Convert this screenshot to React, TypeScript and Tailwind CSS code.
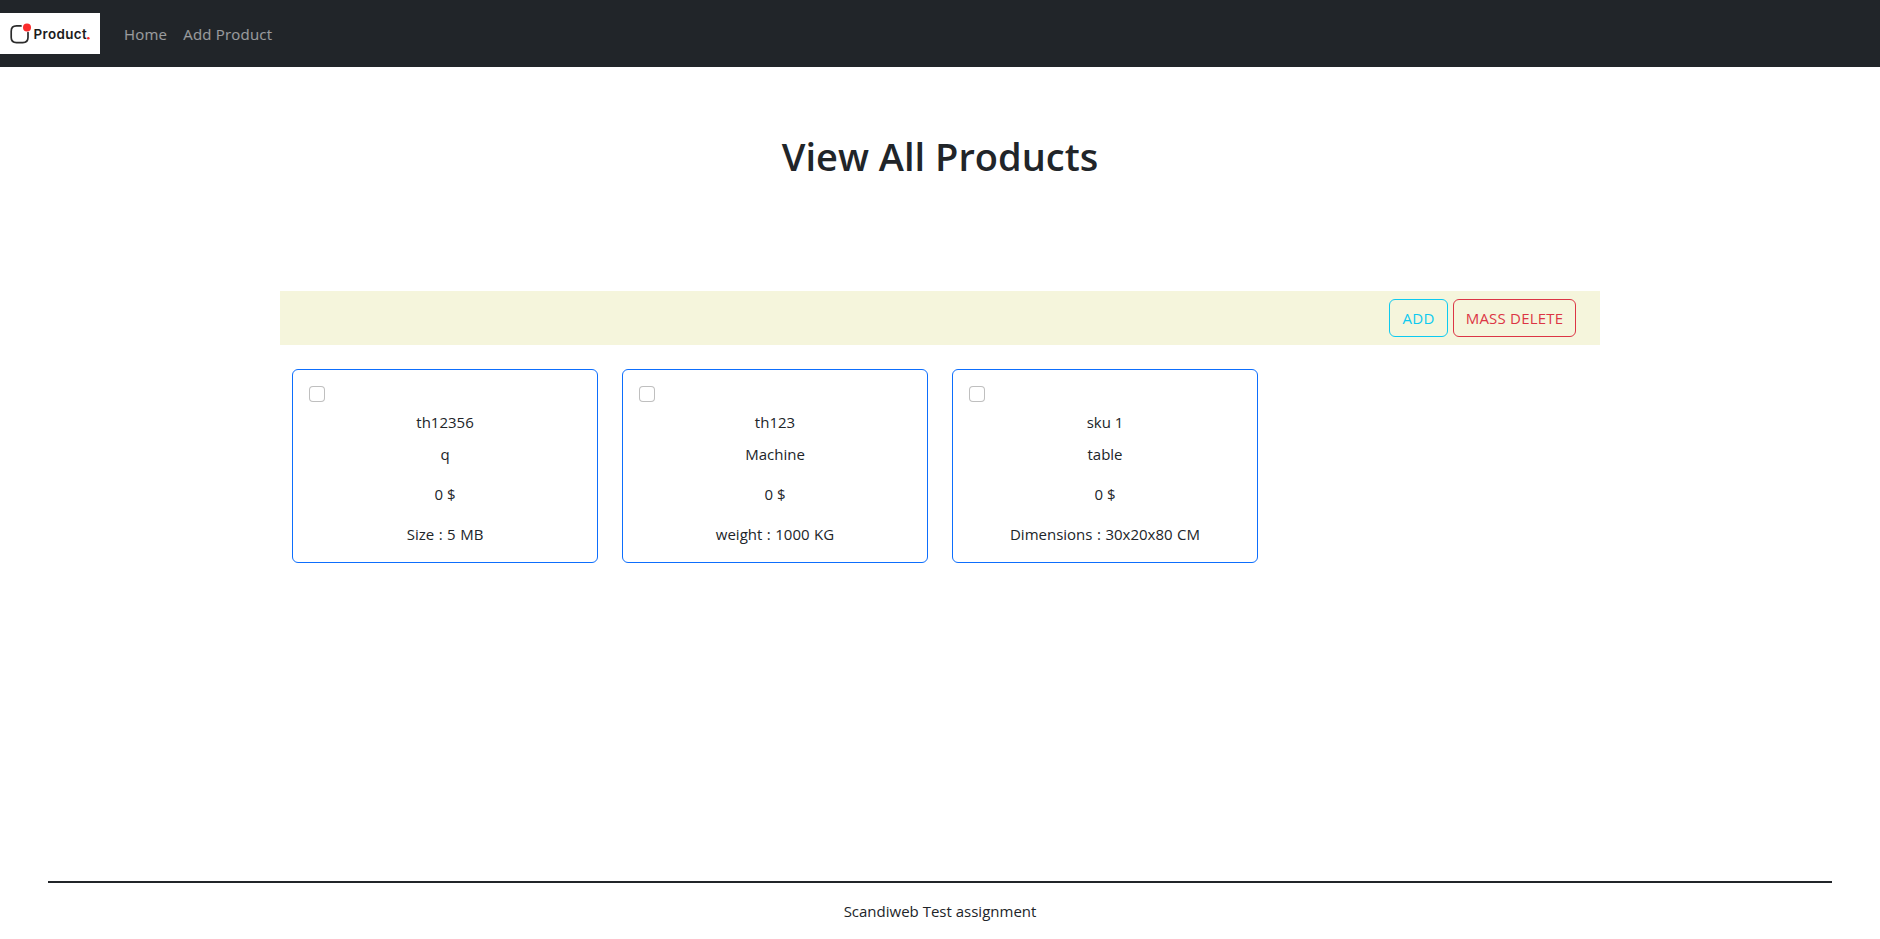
type Product = { sku: string; name: string; price: string; detail: string };

const products: Product[] = [
  { sku: "th12356", name: "q", price: "0 $", detail: "Size : 5 MB" },
  { sku: "th123", name: "Machine", price: "0 $", detail: "weight : 1000 KG" },
  { sku: "sku 1", name: "table", price: "0 $", detail: "Dimensions : 30x20x80 CM" },
];

function Logo() {
  return (
    <svg className="h-[41px] w-[100px] bg-white" viewBox="0 0 100 41" role="img" aria-label="Product">
      <path
        d="M21 12.9H16.5Q11.2 12.9 11.2 18.2V24.6Q11.2 29.6 16.5 29.6H22.8Q28 29.6 28 24.6V19.5"
        fill="none"
        stroke="#2b2b2b"
        strokeWidth="1.7"
        strokeLinecap="round"
      />
      <circle cx="27" cy="14.4" r="4" fill="#fb2c2c" />
      <text x="33.4" y="26.3" fontFamily="Inter, sans-serif" fontSize="13.4" fontWeight="600" fill="#1c1c1c" textLength="53.4" lengthAdjust="spacing">
        Product
      </text>
      <circle cx="88.3" cy="25.3" r="1.3" fill="#fb2c2c" />
    </svg>
  );
}

function ProductCard({ product }: { product: Product }) {
  return (
    <article className="h-[194px] rounded-md border border-[#0d6efd] p-4 text-center">
      <input
        type="checkbox"
        aria-label={product.sku}
        className="block size-4 appearance-none rounded-[4px] border border-black/25 bg-white"
      />
      <p className="mt-2">{product.sku}</p>
      <p className="mt-2">{product.name}</p>
      <p className="mt-4">{product.price}</p>
      <p className="mt-4 [word-spacing:0.6px]">{product.detail}</p>
    </article>
  );
}

export default function App() {
  return (
    <div className="flex h-[939px] flex-col bg-white font-['Open_Sans',sans-serif] text-[15px] leading-6 text-[#212529]">
      <nav className="flex h-[67px] shrink-0 items-center bg-[#212529]">
        <Logo />
        <div className="ml-6 flex gap-4 pt-px tracking-[0.2px] text-white/55">
          <a>Home</a>
          <a>Add Product</a>
        </div>
      </nav>
      <main className="mx-auto w-[1320px]">
        <h1 className="mt-[65px] text-center text-[38px] leading-[48px] font-semibold">View All Products</h1>
        <div className="mt-[111px] flex h-[54px] items-center justify-end gap-[5px] bg-[#f5f5dc] pr-6">
          <button className="h-[38px] w-[59px] rounded-md border border-[#0dcaf0] tracking-[0.3px] text-[#0dcaf0]">ADD</button>
          <button className="h-[38px] w-[123px] rounded-md border border-[#dc3545] tracking-[0.2px] text-[#dc3545]">MASS DELETE</button>
        </div>
        <section className="mt-6 grid grid-cols-4 gap-x-6 px-3">
          {products.map((product) => (
            <ProductCard key={product.sku} product={product} />
          ))}
        </section>
      </main>
      <footer className="mx-12 mt-auto h-[58px] border-t-2 border-[#212529] pt-4 text-center">
        Scandiweb Test assignment
      </footer>
    </div>
  );
}
